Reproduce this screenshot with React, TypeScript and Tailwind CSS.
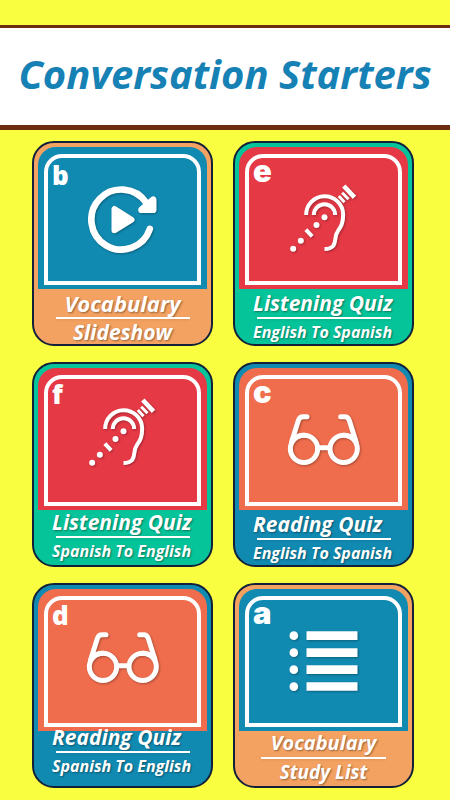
import type { ReactNode } from 'react';
import { clsx } from 'clsx';

type Theme = {
  card: string;
  panel: string;
};

type Tile = {
  id: string;
  theme: Theme;
  icon: ReactNode;
  iconOffset: string;
  badge: string;
  title: string;
  titleSize: string;
  subtitle: string;
  subtitleSize: string;
  caption: string;
  rule: string;
};

const orange: Theme = { card: 'bg-[#f4a261]', panel: 'bg-[#118ab2]' };
const green: Theme = { card: 'bg-[#06c49a]', panel: 'bg-[#e63946]' };
const blue: Theme = { card: 'bg-[#118ab2]', panel: 'bg-[#ef6d4d]' };

function ReplayIcon() {
  return (
    <svg viewBox="188 152 206 204" className="h-[68px] w-[69px]" fill="none" stroke="white" strokeLinecap="round" strokeLinejoin="round">
      <path d="M373 281A90 90 0 1 1 362 202" strokeWidth="20" />
      <path d="M383 193V223H348Z" fill="white" strokeWidth="20" />
      <path d="M267 221V285L318 253Z" fill="white" strokeWidth="18" />
    </svg>
  );
}

function EarIcon() {
  return (
    <svg viewBox="186 146 200 204" className="h-[68px] w-[67px]" fill="none" stroke="white" strokeWidth="12">
      <path d="M234 239A55 55 0 0 1 345 237C345 262 340 272 330 286C317 304 326 316 315 332Q307 341 289 341" />
      <path d="M257 239A32 32 0 0 1 321 239" />
      <path d="M233 283L252 303" />
      <path d="M332 182L349 201M342 172L361 192" strokeWidth="9" />
      <path d="M347 152L379 186" strokeWidth="14" />
      <g fill="white" stroke="none">
        <circle cx="289" cy="246" r="9" />
        <circle cx="265" cy="269" r="9" />
        <circle cx="218" cy="316" r="9" />
        <circle cx="195" cy="340" r="9" />
      </g>
    </svg>
  );
}

function GlassesIcon() {
  return (
    <svg viewBox="180 172 222 158" className="h-[53px] w-[74px]" fill="none" stroke="white" strokeWidth="15" strokeLinecap="round">
      <circle cx="231" cy="279" r="41" />
      <circle cx="350" cy="279" r="41" />
      <path d="M272 276H308" />
      <path d="M194 258L214 194Q218 183 228 183H240" />
      <path d="M387 258L367 194Q363 183 353 183H341" />
      <path d="M196 252Q212 238 231 238M385 252Q369 238 350 238" />
    </svg>
  );
}

function ListIcon() {
  return (
    <svg viewBox="182 161 206 180" className="h-[60px] w-[69px]" fill="white">
      <circle cx="196" cy="175" r="13" />
      <circle cx="196" cy="226" r="13" />
      <circle cx="196" cy="277" r="13" />
      <circle cx="196" cy="328" r="13" />
      <path d="M234 162H387V188H234ZM234 213H387V239H234ZM234 264H387V290H234ZM234 315H387V340H234Z" />
    </svg>
  );
}

const narrowBadge = "top-3 font-['Open_Sans',sans-serif] text-[26px] font-extrabold";
const wideBadge = "top-[10px] font-['Inter',sans-serif] text-[31px] font-black";

const tiles: Tile[] = [
  {
    id: 'b',
    theme: orange,
    icon: <ReplayIcon />,
    iconOffset: 'pt-7',
    badge: "top-[14px] font-['Open_Sans',sans-serif] text-[26px] font-extrabold",
    title: 'Vocabulary',
    titleSize: 'text-[22px]',
    subtitle: 'Slideshow',
    subtitleSize: 'text-[21px]',
    caption: 'items-center pt-[2px]',
    rule: 'w-[134px]',
  },
  {
    id: 'e',
    theme: green,
    icon: <EarIcon />,
    iconOffset: 'pt-[26px]',
    badge: wideBadge,
    title: 'Listening Quiz',
    titleSize: 'text-[21px]',
    subtitle: 'English To Spanish',
    subtitleSize: 'text-[16px]',
    caption: 'pl-[14px] pt-[2px]',
    rule: 'ml-1 w-[134px]',
  },
  {
    id: 'f',
    theme: green,
    icon: <EarIcon />,
    iconOffset: 'pt-[19px]',
    badge: narrowBadge,
    title: 'Listening Quiz',
    titleSize: 'text-[21px]',
    subtitle: 'Spanish To English',
    subtitleSize: 'text-[16px]',
    caption: 'pl-[14px]',
    rule: 'ml-1 w-[134px]',
  },
  {
    id: 'c',
    theme: blue,
    icon: <GlassesIcon />,
    iconOffset: 'pt-[34px]',
    badge: wideBadge,
    title: 'Reading Quiz',
    titleSize: 'text-[21px]',
    subtitle: 'English To Spanish',
    subtitleSize: 'text-[16px]',
    caption: 'pl-[14px] pt-[2px]',
    rule: 'ml-1 w-[134px]',
  },
  {
    id: 'd',
    theme: blue,
    icon: <GlassesIcon />,
    iconOffset: 'pt-[31px]',
    badge: narrowBadge,
    title: 'Reading Quiz',
    titleSize: 'text-[21px]',
    subtitle: 'Spanish To English',
    subtitleSize: 'text-[16px]',
    caption: '-mt-[6px] pl-[14px]',
    rule: 'ml-1 w-[134px]',
  },
  {
    id: 'a',
    theme: orange,
    icon: <ListIcon />,
    iconOffset: 'pt-[31px]',
    badge: wideBadge,
    title: 'Vocabulary',
    titleSize: 'text-[20px]',
    subtitle: 'Study List',
    subtitleSize: 'text-[19px]',
    caption: 'items-center',
    rule: 'w-[125px]',
  },
];

function TileCard({ tile }: { tile: Tile }) {
  return (
    <button
      type="button"
      className={clsx(
        'flex min-h-[205px] flex-col justify-start rounded-[22px] border-2 border-[#12203a] px-1 pt-1 text-left text-white',
        tile.theme.card,
      )}
    >
      <span className={clsx('relative flex h-[142px] w-full rounded-t-[18px] px-[6px] pt-[7px] pb-1', tile.theme.panel)}>
        <span className={clsx('flex flex-1 items-start justify-center rounded-t-[18px] border-4 border-white', tile.iconOffset)}>
          <span className="drop-shadow-[1px_1px_1px_rgba(0,0,0,0.3)]">{tile.icon}</span>
        </span>
        <span className={clsx('absolute left-[14px] leading-7', tile.badge)}>{tile.id}</span>
      </span>
      <span
        className={clsx(
          "relative -mb-1 flex w-full flex-col whitespace-nowrap font-['Open_Sans',sans-serif] font-bold italic [text-shadow:1px_1px_2px_rgba(0,0,0,0.4)]",
          tile.caption,
        )}
      >
        <span className={clsx('leading-6', tile.titleSize)}>{tile.title}</span>
        <span className={clsx('mt-[2px] h-[2px] bg-white shadow-sm', tile.rule)} />
        <span className={clsx('leading-[27px]', tile.subtitleSize)}>{tile.subtitle}</span>
      </span>
    </button>
  );
}

export default function App() {
  return (
    <div className="min-h-screen bg-[#f9ff40] pt-[25px] pb-3">
      <header className="border-t-[3px] border-b-[5px] border-[#6b2c12] bg-white pt-4 pb-[21px]">
        <h1 className="text-center font-['Open_Sans',sans-serif] text-[40px] leading-[60px] font-bold whitespace-nowrap text-[#1681b4] italic">
          Conversation Starters
        </h1>
      </header>
      <main className="mt-[11px] grid grid-cols-2 gap-x-5 gap-y-4 pr-9 pl-8">
        {tiles.map((tile) => (
          <TileCard key={tile.id} tile={tile} />
        ))}
      </main>
    </div>
  );
}
